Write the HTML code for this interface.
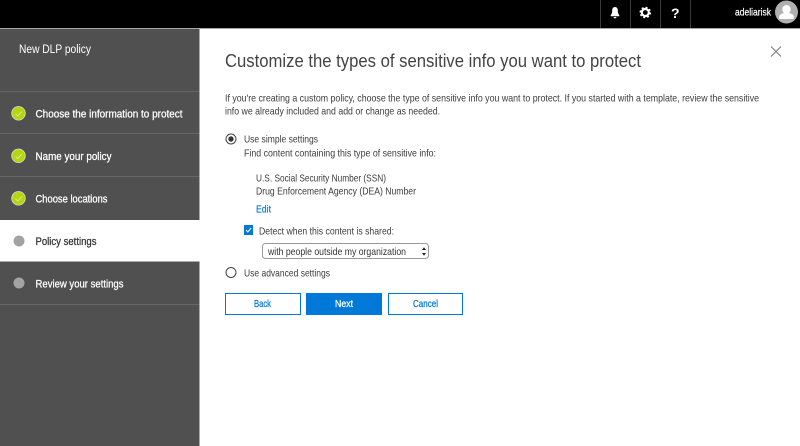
<!DOCTYPE html>
<html><head><meta charset="utf-8"><title>New DLP policy</title>
<style>
html,body{margin:0;padding:0;background:#fff;width:800px;height:446px;overflow:hidden}
svg{display:block;filter:blur(.3px)}
text{font-family:"Liberation Sans",sans-serif}
</style></head><body>
<svg width="800" height="446" viewBox="0 0 800 446" xmlns="http://www.w3.org/2000/svg">
<rect width="800" height="446" fill="#fff"/>
<rect width="800" height="28" fill="#000"/>
<rect y="28" width="800" height="1" fill="#a8a8a8"/>
<g fill="#3a3a3a"><rect x="600" width="1" height="28"/><rect x="630" width="1" height="28"/><rect x="660" width="1" height="28"/><rect x="690" width="1" height="28"/></g>
<path d="M615 7c-1.900 0-2.800 1.500-2.800 3.200 0 2.400-.5 3.800-1.500 4.900v1.100h8.600v-1.100c-1-1.100-1.500-2.500-1.500-4.900 0-1.700-.9-3.200-2.800-3.200zM613.600 17h2.800a1.400 1.400 0 0 1-2.800 0z" fill="#fff"/>
<circle cx="645.300" cy="12.500" r="3.500" fill="none" stroke="#fff" stroke-width="2.200"/>
<circle cx="645.300" cy="12.500" r="5" fill="none" stroke="#fff" stroke-width="1.600" stroke-dasharray="2 1.930"/>
<text x="671" y="18" font-size="14" font-weight="700" fill="#fff">?</text>
<text x="735" y="15.500" font-size="10.500" fill="#fff" stroke="#fff" stroke-width="0.200" textLength="36" lengthAdjust="spacingAndGlyphs">adeliarisk</text>
<circle cx="786.500" cy="12" r="11.500" fill="#b0b0b0"/>
<path d="M786.500 5a4.200 4.200 0 0 1 4.200 4.400c0 1.600-.8 2.900-1.800 3.600 2.900.7 4.900 1.800 4.900 3.800v2.200h-14.600v-2.200c0-2 2-3.100 4.900-3.800-1-.7-1.800-2-1.800-3.600a4.200 4.200 0 0 1 4.200-4.400z" fill="#fff"/>

<rect y="29" width="199.500" height="417" fill="#505050"/>
<g fill="#666"><rect y="91" width="199.500" height="1"/><rect y="133" width="199.500" height="1"/><rect y="176" width="199.500" height="1"/><rect y="304" width="199.500" height="1"/></g>
<rect y="220" width="200" height="41" fill="#fff"/>
<rect y="261" width="199.500" height="1" fill="#aaa"/>
<text x="19" y="53" font-size="11.500" fill="#fff" textLength="72" lengthAdjust="spacingAndGlyphs">New DLP policy</text>

<g fill="#b4d510" stroke="#dcdcdc" stroke-width="0.800"><circle cx="18.500" cy="113.300" r="6.800"/><circle cx="18.500" cy="155.800" r="6.800"/><circle cx="18.500" cy="198.300" r="6.800"/></g>
<g fill="none" stroke="#e3eea0" stroke-width="0.800"><path d="M15.500 113.800l2.300 2.200 4-4.500"/><path d="M15.500 156.300l2.300 2.200 4-4.500"/><path d="M15.500 198.800l2.300 2.200 4-4.500"/></g>
<circle cx="19" cy="241" r="5.500" fill="#a3a3a3"/><circle cx="19" cy="283" r="5.500" fill="#a3a3a3"/>

<g font-size="11" fill="#fff" stroke="#fff" stroke-width="0.250">
<text x="35.500" y="117.500" textLength="147" lengthAdjust="spacingAndGlyphs">Choose the information to protect</text>
<text x="35.500" y="160" textLength="76" lengthAdjust="spacingAndGlyphs">Name your policy</text>
<text x="35.500" y="202.500" textLength="72" lengthAdjust="spacingAndGlyphs">Choose locations</text>
<text x="35.500" y="245" textLength="61" lengthAdjust="spacingAndGlyphs" fill="#333" stroke="#333">Policy settings</text>
<text x="35.500" y="287.500" textLength="88" lengthAdjust="spacingAndGlyphs">Review your settings</text>
</g>

<path d="M771 46.500l10 10M781 46.500l-10 10" stroke="#777" stroke-width="1" fill="none"/>

<text x="225" y="67" font-size="18.500" fill="#444" textLength="416" lengthAdjust="spacingAndGlyphs">Customize the types of sensitive info you want to protect</text>
<g font-size="10.500" fill="#3c3c3c">
<text x="225" y="101.500" textLength="534" lengthAdjust="spacingAndGlyphs">If you're creating a custom policy, choose the type of sensitive info you want to protect. If you started with a template, review the sensitive</text>
<text x="225" y="114.500" textLength="215" lengthAdjust="spacingAndGlyphs">info we already included and add or change as needed.</text>
<text x="244" y="142.500" textLength="74" lengthAdjust="spacingAndGlyphs">Use simple settings</text>
<text x="244" y="156.500" textLength="192" lengthAdjust="spacingAndGlyphs">Find content containing this type of sensitive info:</text>
<text x="256" y="181.500" textLength="130" lengthAdjust="spacingAndGlyphs">U.S. Social Security Number (SSN)</text>
<text x="256" y="194.500" textLength="160" lengthAdjust="spacingAndGlyphs">Drug Enforcement Agency (DEA) Number</text>
<text x="259" y="234.500" textLength="135" lengthAdjust="spacingAndGlyphs">Detect when this content is shared:</text>
<text x="244" y="276.500" textLength="86" lengthAdjust="spacingAndGlyphs">Use advanced settings</text>
</g>
<text x="256" y="212.500" font-size="10.500" fill="#0078d7" stroke="#0078d7" stroke-width="0.150" textLength="15" lengthAdjust="spacingAndGlyphs">Edit</text>

<circle cx="231" cy="139" r="5" fill="#fff" stroke="#444" stroke-width="1"/><circle cx="231" cy="139" r="2.700" fill="#333"/>
<circle cx="231" cy="272.500" r="5" fill="#fff" stroke="#444" stroke-width="1"/>

<rect x="244" y="225" width="9" height="10" fill="#0078d7"/>
<path d="M246 230l1.800 2 3.400-4" fill="none" stroke="#fff" stroke-width="1"/>

<rect x="262.500" y="243.500" width="166" height="15" rx="3" fill="#fff" stroke="#9a9a9a"/>
<text x="268" y="255" font-size="10.500" fill="#333" textLength="138" lengthAdjust="spacingAndGlyphs">with people outside my organization</text>
<path d="M422 250l2-2.700 2 2.700zM422 253l2 2.700 2-2.700z" fill="#222"/>

<rect x="225.500" y="293.500" width="75" height="21" fill="#fff" stroke="#0078d7"/>
<rect x="306" y="293" width="76" height="22" fill="#0078d7"/>
<rect x="388.500" y="293.500" width="74" height="21" fill="#fff" stroke="#0078d7"/>
<g font-size="10.500" stroke-width="0.250">
<text x="254" y="307" fill="#0078d7" stroke="#0078d7" textLength="17" lengthAdjust="spacingAndGlyphs">Back</text>
<text x="335" y="307" fill="#fff" stroke="#fff" textLength="18" lengthAdjust="spacingAndGlyphs">Next</text>
<text x="413" y="307" fill="#0078d7" stroke="#0078d7" textLength="25" lengthAdjust="spacingAndGlyphs">Cancel</text>
</g>
</svg>
</body></html>
